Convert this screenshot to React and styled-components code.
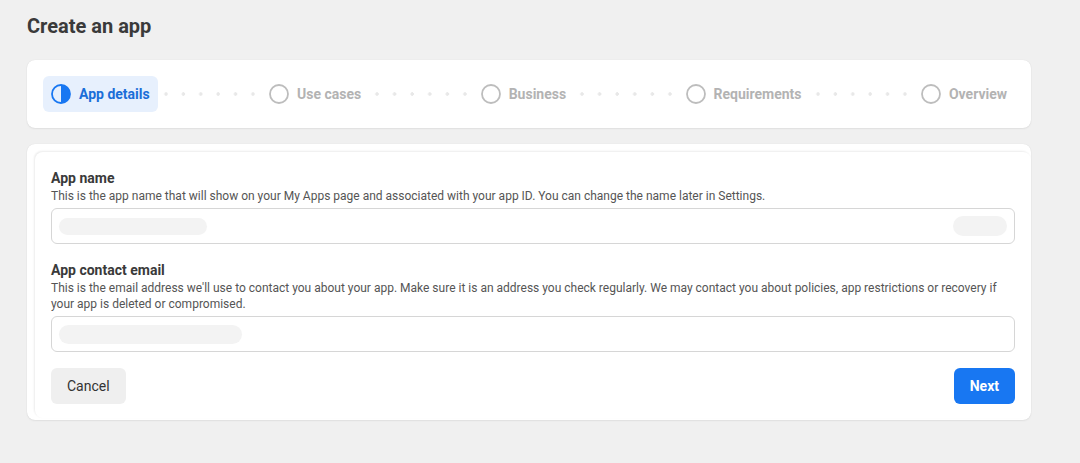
import React from 'react';
import styled, { createGlobalStyle } from 'styled-components';

const GlobalStyle = createGlobalStyle`
  html, body {
    margin: 0;
    padding: 0;
    background: #f0f0f0;
    font-family: Roboto, "Liberation Sans", Arial, sans-serif;
  }
`;

const Page = styled.div`
  padding: 14px 49px 40px 27px;
  display: flex;
  flex-direction: column;
`;

const Title = styled.h1`
  margin: 0 0 22px;
  font-size: 20px;
  line-height: 24px;
  font-weight: 700;
  color: #3a3a3a;
`;

const Card = styled.div`
  background: #fff;
  border-radius: 8px;
  box-shadow: 0 0 1px rgba(0, 0, 0, 0.12), 0 1px 2px rgba(0, 0, 0, 0.06);
`;

const StepperCard = styled(Card)`
  display: flex;
  align-items: center;
  padding: 16px;
  margin-bottom: 16px;
`;

const Step = styled.div`
  display: flex;
  align-items: center;
  gap: 8px;
  height: 36px;
  padding: 0 8px;
  border-radius: 6px;
  background: ${p => (p.$active ? '#e7f0fd' : 'transparent')};
  color: ${p => (p.$active ? '#1a6ed8' : '#b3b3b3')};
  font-size: 14px;
  font-weight: 700;
  white-space: nowrap;
`;

const Connector = styled.div`
  flex: 1;
  height: 4px;
  background-image: radial-gradient(circle, #e8e8e8 1.5px, transparent 2px);
  background-size: 16px 4px;
  background-position: center;
  background-repeat: space;
`;

const FormCard = styled(Card)`
  padding: 8px 0 2px 8px;
`;

const Panel = styled.div`
  background: #fff;
  border-radius: 8px;
  box-shadow: -1px -1px 2px rgba(0, 0, 0, 0.08);
  padding: 16px 16px 14px 16px;
  display: flex;
  flex-direction: column;
`;

const Label = styled.div`
  font-size: 14px;
  line-height: 20px;
  font-weight: 700;
  color: #3a3a3a;
  margin-top: ${p => (p.$first ? '0' : '16px')};
`;

const Hint = styled.div`
  font-size: 12px;
  line-height: 16px;
  color: #555;
  margin-bottom: 4px;
`;

const Input = styled.div`
  height: 34px;
  border: 1px solid #d6d6d6;
  border-radius: 6px;
  display: flex;
  align-items: center;
  justify-content: space-between;
  padding: 0 7px;
`;

const Skeleton = styled.div`
  width: ${p => p.$w}px;
  height: ${p => p.$h}px;
  border-radius: 10px;
  background: #f3f3f3;
`;

const Actions = styled.div`
  display: flex;
  justify-content: space-between;
  margin-top: 16px;
`;

const Button = styled.button`
  height: 36px;
  padding: 0 16px;
  border: none;
  border-radius: 6px;
  font-family: inherit;
  font-size: 14px;
  background: ${p => (p.$primary ? '#1877f2' : '#efefef')};
  color: ${p => (p.$primary ? '#fff' : '#333')};
  font-weight: ${p => (p.$primary ? 700 : 400)};
`;

const HalfCircle = () => (
  <svg width="20" height="20" viewBox="0 0 20 20">
    <circle cx="10" cy="10" r="9" fill="none" stroke="#1877f2" strokeWidth="1.8" />
    <path d="M10 1 A9 9 0 0 1 10 19 Z" fill="#1877f2" />
  </svg>
);

const EmptyCircle = () => (
  <svg width="20" height="20" viewBox="0 0 20 20">
    <circle cx="10" cy="10" r="9" fill="none" stroke="#bdbdbd" strokeWidth="1.8" />
  </svg>
);

const steps = ['App details', 'Use cases', 'Business', 'Requirements', 'Overview'];

export default function App() {
  return (
    <>
      <GlobalStyle />
      <Page>
        <Title>Create an app</Title>
        <StepperCard>
          {steps.map((s, i) => (
            <React.Fragment key={s}>
              {i > 0 && <Connector />}
              <Step $active={i === 0}>
                {i === 0 ? <HalfCircle /> : <EmptyCircle />}
                {s}
              </Step>
            </React.Fragment>
          ))}
        </StepperCard>
        <FormCard>
          <Panel>
            <Label $first>App name</Label>
            <Hint>
              This is the app name that will show on your My Apps page and associated with your app ID. You can change the name later in Settings.
            </Hint>
            <Input>
              <Skeleton $w={148} $h={17} />
              <Skeleton $w={54} $h={20} />
            </Input>
            <Label>App contact email</Label>
            <Hint>
              This is the email address we'll use to contact you about your app. Make sure it is an address you check regularly. We may contact you about policies, app restrictions or recovery if your app is deleted or compromised.
            </Hint>
            <Input>
              <Skeleton $w={183} $h={19} />
            </Input>
            <Actions>
              <Button>Cancel</Button>
              <Button $primary>Next</Button>
            </Actions>
          </Panel>
        </FormCard>
      </Page>
    </>
  );
}
